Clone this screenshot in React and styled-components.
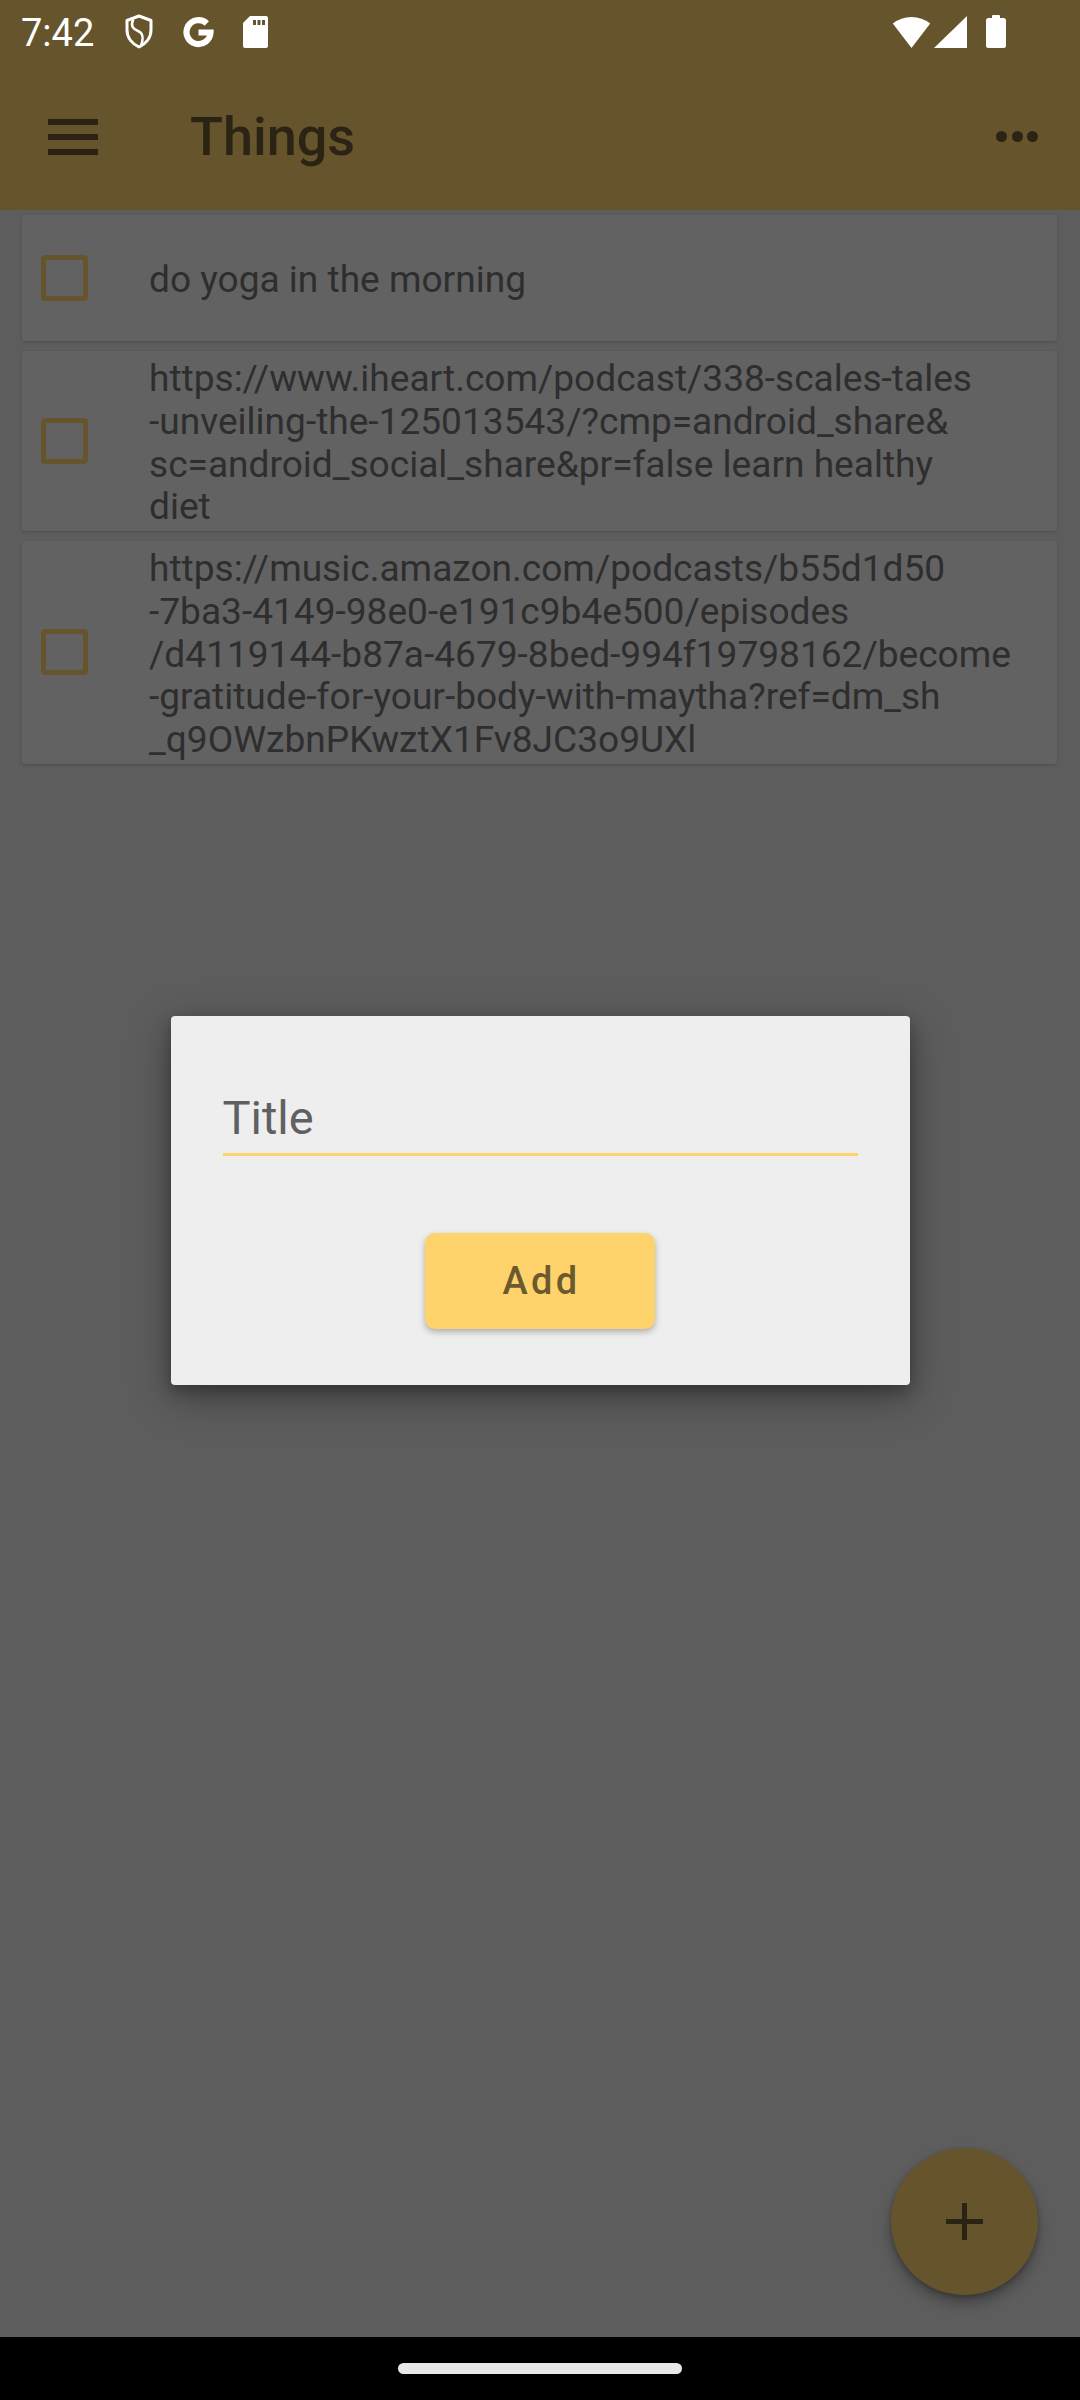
import React from "react";
import styled, { createGlobalStyle } from "styled-components";

const Global = createGlobalStyle`
  html, body { margin: 0; padding: 0; background: #000; }
  * { box-sizing: border-box; }
`;

const FONT = `Roboto, "Liberation Sans", Arial, sans-serif`;

const Screen = styled.div`
  width: 1080px;
  height: 2400px;
  display: flex;
  flex-direction: column;
  overflow: hidden;
  font-family: ${FONT};
`;

const StatusBar = styled.div`
  height: 63px;
  flex: none;
  background: #66552c;
  display: flex;
  align-items: center;
  padding: 0 74px 0 21px;
  color: #fff;
`;

const Clock = styled.span`
  font-size: 38px;
  line-height: 1;
  margin-right: 2px;
  margin-top: 2px;
`;

const StatusLeft = styled.div`
  display: flex;
  align-items: center;
  gap: 28px;
  flex: 1;
`;

const StatusRight = styled.div`
  display: flex;
  align-items: center;
  gap: 3px;
`;

const Main = styled.div`
  position: relative;
  flex: 1;
  background: #e8e8e8;
  display: flex;
  flex-direction: column;
`;

const AppBar = styled.div`
  height: 147px;
  flex: none;
  background: #ffd46e;
  display: flex;
  align-items: center;
  padding: 0 42px 0 48px;
  color: #6b5a32;
`;

const Title = styled.h1`
  margin: 0 0 0 92px;
  flex: 1;
  font-size: 54px;
  font-weight: 500;
  line-height: 1;
  color: #6b5a32;
`;

const Dots = styled.div`
  display: flex;
  gap: 4.5px;
  & > span {
    width: 11px;
    height: 11px;
    border-radius: 50%;
    background: #6b5a32;
  }
`;

const List = styled.div`
  display: flex;
  flex-direction: column;
  gap: 10px;
  padding: 5px 23px 0 22px;
`;

const Card = styled.div`
  min-height: 126px;
  background: #f5f5f5;
  border-radius: 3px;
  box-shadow: 0 1px 3px rgba(0, 0, 0, 0.18);
  display: flex;
  align-items: center;
  padding: 7px 0 2px 19px;
`;

const Check = styled.span`
  width: 47px;
  height: 46px;
  flex: none;
  border: 5px solid #ffd46e;
  border-radius: 4px;
  margin: -5px 61px 0 0;
`;

const ItemText = styled.div`
  font-size: 37.1px;
  line-height: 42.75px;
  color: #737373;
  white-space: nowrap;
`;

const Line = styled.div``;

const Fab = styled.div`
  position: absolute;
  right: 42px;
  bottom: 42px;
  width: 147px;
  height: 147px;
  border-radius: 50%;
  background: #ffd46e;
  box-shadow: 0 8px 14px rgba(0, 0, 0, 0.3), 0 2px 5px rgba(0, 0, 0, 0.2);
  display: flex;
  align-items: center;
  justify-content: center;
`;

const Scrim = styled.div`
  position: absolute;
  inset: 0;
  background: rgba(0, 0, 0, 0.6);
  display: flex;
  align-items: center;
  justify-content: center;
  z-index: 5;
`;

const Dialog = styled.div`
  width: 739px;
  height: 369px;
  background: #eeeeee;
  border-radius: 4px;
  box-shadow: 0 12px 40px rgba(0, 0, 0, 0.35), 0 6px 14px rgba(0, 0, 0, 0.25);
  padding: 74px 52px 0;
  display: flex;
  flex-direction: column;
`;

const Field = styled.div`
  font-size: 47px;
  line-height: 55px;
  color: #606060;
  padding: 0 0 8px 0;
  border-bottom: 3px solid #ffd36b;
`;

const AddButton = styled.button`
  align-self: center;
  margin-top: 77px;
  width: 230px;
  height: 96px;
  border: none;
  border-radius: 10px;
  background: #ffd36b;
  box-shadow: 0 3px 6px rgba(0, 0, 0, 0.28);
  font-family: ${FONT};
  font-size: 38px;
  font-weight: 500;
  letter-spacing: 3.4px;
  color: #6b5a2d;
  padding: 0 0 0 3px;
`;

const NavBar = styled.div`
  height: 63px;
  flex: none;
  background: #000;
  display: flex;
  justify-content: center;
  padding-top: 26px;
`;

const Pill = styled.div`
  width: 284px;
  height: 11px;
  border-radius: 6px;
  background: #e8e8e8;
`;

const Shield = () => (
  <svg width="30" height="35" viewBox="0 0 30 35">
    <path
      d="M15 2 L27 6.5 V16 C27 24 21.5 30 15 33 C8.5 30 3 24 3 16 V6.5 Z"
      fill="none"
      stroke="#fff"
      strokeWidth="3"
      strokeLinejoin="round"
    />
    <path
      d="M9 6 C6.5 12 9 15 14 17 C19 19 20 23 17 32"
      fill="none"
      stroke="#fff"
      strokeWidth="2.6"
      strokeLinecap="round"
    />
  </svg>
);

const GLogo = () => (
  <svg width="33" height="34" viewBox="0 0 33 34">
    <path
      d="M24.8 8.4 A12 12 0 1 0 28.5 17.5 H16.5"
      fill="none"
      stroke="#fff"
      strokeWidth="6.2"
    />
  </svg>
);

const SdCard = () => (
  <svg width="25" height="32" viewBox="0 0 25 32">
    <path
      d="M7 0 H23 A2 2 0 0 1 25 2 V30 A2 2 0 0 1 23 32 H2 A2 2 0 0 1 0 30 V7 Z"
      fill="#fff"
    />
    <rect x="10" y="4" width="3" height="5" fill="#66552c" />
    <rect x="14.5" y="4" width="3" height="5" fill="#66552c" />
    <rect x="19" y="4" width="3" height="5" fill="#66552c" />
  </svg>
);

const Wifi = () => (
  <svg width="39" height="33" viewBox="0 0 39 33">
    <path d="M19.5 33 L0.8 8.6 A30 30 0 0 1 38.2 8.6 Z" fill="#fff" />
  </svg>
);

const Signal = () => (
  <svg width="33" height="32" viewBox="0 0 33 32">
    <path d="M0 32 L33 0 V32 Z" fill="#fff" />
  </svg>
);

const Battery = () => (
  <svg width="20" height="33" viewBox="0 0 20 33" style={{ marginLeft: 16 }}>
    <rect x="6" y="0" width="8" height="5" rx="1" fill="#fff" />
    <rect x="0" y="3" width="20" height="30" rx="2.5" fill="#fff" />
  </svg>
);

const Menu = () => (
  <svg width="50" height="36" viewBox="0 0 50 36">
    <rect x="0" y="0" width="50" height="6" fill="#6b5a32" />
    <rect x="0" y="15" width="50" height="6" fill="#6b5a32" />
    <rect x="0" y="30" width="50" height="6" fill="#6b5a32" />
  </svg>
);

const Plus = () => (
  <svg width="37" height="37" viewBox="0 0 37 37">
    <rect x="16" y="0" width="5" height="37" fill="#6b5a32" />
    <rect x="0" y="16" width="37" height="5" fill="#6b5a32" />
  </svg>
);

const items = [
  ["do yoga in the morning"],
  [
    "https://www.iheart.com/podcast/338-scales-tales",
    "-unveiling-the-125013543/?cmp=android_share&",
    "sc=android_social_share&pr=false learn healthy",
    "diet",
  ],
  [
    "https://music.amazon.com/podcasts/b55d1d50",
    "-7ba3-4149-98e0-e191c9b4e500/episodes",
    "/d4119144-b87a-4679-8bed-994f19798162/become",
    "-gratitude-for-your-body-with-maytha?ref=dm_sh",
    "_q9OWzbnPKwztX1Fv8JC3o9UXl",
  ],
];

export default function App() {
  return (
    <>
      <Global />
      <Screen>
        <StatusBar>
          <StatusLeft>
            <Clock>7:42</Clock>
            <Shield />
            <GLogo />
            <SdCard />
          </StatusLeft>
          <StatusRight>
            <Wifi />
            <Signal />
            <Battery />
          </StatusRight>
        </StatusBar>
        <Main>
          <AppBar>
            <Menu />
            <Title>Things</Title>
            <Dots>
              <span />
              <span />
              <span />
            </Dots>
          </AppBar>
          <List>
            {items.map((lines, i) => (
              <Card key={i}>
                <Check />
                <ItemText>
                  {lines.map((l, j) => (
                    <Line key={j}>{l}</Line>
                  ))}
                </ItemText>
              </Card>
            ))}
          </List>
          <Fab>
            <Plus />
          </Fab>
          <Scrim>
            <Dialog>
              <Field>Title</Field>
              <AddButton>Add</AddButton>
            </Dialog>
          </Scrim>
        </Main>
        <NavBar>
          <Pill />
        </NavBar>
      </Screen>
    </>
  );
}
